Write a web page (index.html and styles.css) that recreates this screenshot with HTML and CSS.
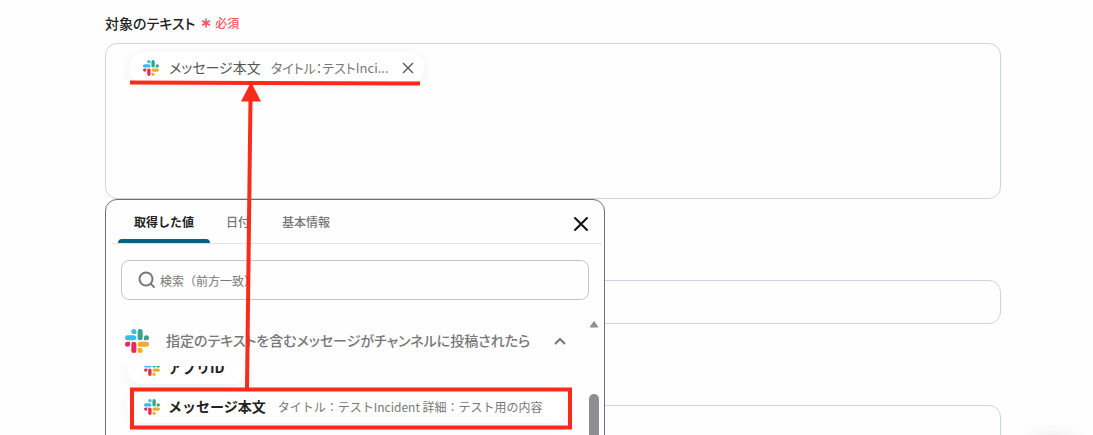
FILE: index.html
```html
<!DOCTYPE html>
<html lang="ja">
<head>
  <meta charset="UTF-8">
  <meta name="viewport" content="width=device-width, initial-scale=1.0">
  <title>対象のテキスト</title>
  <link rel="stylesheet" href="styles.css">
</head>
<body>
  <svg class="sprite" xmlns="http://www.w3.org/2000/svg">
    <symbol id="slack" viewBox="0 0 24 24">
      <path fill="#e9285c" d="M5.042 15.165a2.528 2.528 0 0 1-2.52 2.523A2.528 2.528 0 0 1 0 15.165a2.527 2.527 0 0 1 2.522-2.52h2.52v2.52zM6.313 15.165a2.527 2.527 0 0 1 2.521-2.52 2.527 2.527 0 0 1 2.521 2.52v6.313A2.528 2.528 0 0 1 8.834 24a2.528 2.528 0 0 1-2.521-2.522v-6.313z"></path>
      <path fill="#36bdf2" d="M8.834 5.042a2.528 2.528 0 0 1-2.521-2.52A2.528 2.528 0 0 1 8.834 0a2.528 2.528 0 0 1 2.521 2.522v2.52H8.834zM8.834 6.313a2.528 2.528 0 0 1 2.521 2.521 2.528 2.528 0 0 1-2.521 2.521H2.522A2.528 2.528 0 0 1 0 8.834a2.528 2.528 0 0 1 2.522-2.521h6.312z"></path>
      <path fill="#2fa98a" d="M18.956 8.834a2.528 2.528 0 0 1 2.522-2.521A2.528 2.528 0 0 1 24 8.834a2.528 2.528 0 0 1-2.522 2.521h-2.522V8.834zM17.688 8.834a2.528 2.528 0 0 1-2.523 2.521 2.527 2.527 0 0 1-2.52-2.521V2.522A2.527 2.527 0 0 1 15.165 0a2.528 2.528 0 0 1 2.523 2.522v6.312z"></path>
      <path fill="#f0ad2d" d="M15.165 18.956a2.528 2.528 0 0 1 2.523 2.522A2.528 2.528 0 0 1 15.165 24a2.527 2.527 0 0 1-2.52-2.522v-2.522h2.52zM15.165 17.688a2.527 2.527 0 0 1-2.52-2.523 2.526 2.526 0 0 1 2.52-2.52h6.313A2.527 2.527 0 0 1 24 15.165a2.528 2.528 0 0 1-2.522 2.523h-6.313z"></path>
    </symbol>
  </svg>

  <form class="form">
    <div class="form-group">
      <label class="form-label" for="target-text">
        対象のテキスト
        <span class="required">
          <svg class="asterisk" viewBox="0 0 10 10" fill="none" stroke="currentColor" stroke-width="1.6">
            <path d="M5 0.5v9M1.1 2.7l7.8 4.6M8.9 2.7l-7.8 4.6"></path>
          </svg>
          必須
        </span>
      </label>

      <div class="token-box">
        <div class="chip">
          <svg class="icon-slack"><use href="#slack"></use></svg>
          <span class="chip-name">メッセージ本文</span>
          <span class="chip-value">タイトル：テストInci...</span>
          <button type="button" class="chip-remove" aria-label="削除">
            <svg viewBox="0 0 12 12" fill="none" stroke="currentColor" stroke-width="1.4">
              <path d="M1 1l10 10M11 1L1 11"></path>
            </svg>
          </button>
        </div>
        <textarea id="target-text" class="token-input"></textarea>
      </div>

      <div class="picker">
        <div class="tabs">
          <button type="button" class="tab active">取得した値</button>
          <button type="button" class="tab">日付</button>
          <button type="button" class="tab">基本情報</button>
          <button type="button" class="picker-close" aria-label="閉じる">
            <svg viewBox="0 0 16 16" fill="none" stroke="currentColor" stroke-width="2" stroke-linecap="round">
              <path d="M2 2l12 12M14 2L2 14"></path>
            </svg>
          </button>
        </div>

        <div class="search">
          <svg viewBox="0 0 18 18" fill="none" stroke="currentColor" stroke-width="2">
            <circle cx="8" cy="8" r="6.5"></circle>
            <path d="M12.6 12.6l4 4"></path>
          </svg>
          <input type="text" placeholder="検索（前方一致）" aria-label="検索">
        </div>

        <div class="picker-body">
          <div class="group">
            <button type="button" class="group-header">
              <svg class="icon-slack large"><use href="#slack"></use></svg>
              <span>指定のテキストを含むメッセージがチャンネルに投稿されたら</span>
              <svg class="chevron" viewBox="0 0 12 8" fill="none" stroke="currentColor" stroke-width="2">
                <path d="M1 7l5-5 5 5"></path>
              </svg>
            </button>
            <div class="items">
              <ul>
                <li>
                  <button type="button" class="item">
                    <svg class="icon-slack"><use href="#slack"></use></svg>
                    <span class="item-name">アプリID</span>
                  </button>
                </li>
                <li>
                  <button type="button" class="item">
                    <svg class="icon-slack"><use href="#slack"></use></svg>
                    <span class="item-name">メッセージ本文</span>
                    <span class="item-value">タイトル：テストIncident 詳細：テスト用の内容</span>
                  </button>
                </li>
              </ul>
            </div>
          </div>
          <div class="scrollbar">
            <svg viewBox="0 0 10 8"><path fill="currentColor" stroke="currentColor" stroke-linejoin="round" d="M5 1.5l3.8 5.5H1.2z"></path></svg>
            <div class="scrollbar-thumb"></div>
          </div>
        </div>
      </div>
    </div>

    <input type="text" class="form-input" aria-label="入力欄 2">
    <input type="text" class="form-input" aria-label="入力欄 3">
  </form>

  <button type="button" class="floating-btn" aria-label="ヘルプ"></button>

  <!-- 操作手順を示す赤い注釈 -->
  <svg class="annotation" viewBox="0 0 580 435" fill="none" stroke="#fa2c19">
    <path stroke-width="4" d="M130 82.5L420 83.5"></path>
    <path stroke-width="4" d="M250.5 98L247 388"></path>
    <path fill="#fa2c19" stroke="none" d="M251 82l10 19.5h-20z"></path>
    <rect x="132" y="389.5" width="438" height="38" stroke-width="4"></rect>
  </svg>
</body>
</html>
```
FILE: styles.css
```css
* {
  box-sizing: border-box;
  margin: 0;
  padding: 0;
}

body {
  min-height: 100vh;
  overflow: hidden;
  background-color: #fefefe;
  color: #222;
  font-family: 'Noto Sans CJK JP', 'Noto Sans', sans-serif;
  font-size: 12px;
}

button,
input,
textarea {
  border: none;
  background: none;
  color: inherit;
  font: inherit;
  outline: none;
}

button {
  cursor: pointer;
}

.sprite {
  position: absolute;
  width: 0;
  height: 0;
}

.form {
  display: flex;
  flex-direction: column;
  gap: 81px;
  padding: 11px 92px 0 105px;
}

.form-group {
  position: relative;
}

.form-label {
  display: flex;
  align-items: center;
  gap: 6px;
  margin-bottom: 8px;
  font-size: 14px;
  font-weight: 500;
  line-height: 24px;
  font-feature-settings: 'palt';
}

.required {
  display: flex;
  align-items: center;
  gap: 4px;
  color: #fb5360;
  font-size: 12px;
  font-feature-settings: normal;
}

.asterisk {
  width: 10px;
  height: 10px;
}

.token-box {
  display: flex;
  flex-direction: column;
  align-items: flex-start;
  height: 156px;
  padding: 8px 23px;
  border: 1px solid #cfd3e0;
  border-radius: 12px;
}

.chip {
  display: flex;
  align-items: center;
  height: 32px;
  padding: 0 10px 0 14px;
  border-radius: 16px;
  background-color: #fff;
  box-shadow: 0 2px 12px rgba(80, 50, 110, 0.08);
  font-feature-settings: 'palt';
}

.icon-slack {
  flex-shrink: 0;
  width: 16px;
  height: 16px;
}

.icon-slack.large {
  width: 24px;
  height: 24px;
}

.chip-name,
.chip-value,
.item-name,
.item-value,
.group-header span {
  padding-bottom: 2px;
}

.chip-name {
  margin-left: 10px;
  color: #555;
  font-size: 14px;
}

.chip-value {
  margin-left: 10px;
  color: #777;
  font-size: 13px;
}

.chip-remove {
  display: flex;
  margin-left: 13px;
  color: #555;
}

.chip-remove svg {
  width: 12px;
  height: 12px;
}

.token-input {
  flex: 1;
  width: 100%;
  resize: none;
}

.form-input {
  height: 44px;
  padding: 0 16px;
  border: 1px solid #cfd3e0;
  border-radius: 12px;
}

.picker {
  position: absolute;
  top: 100%;
  left: 0;
  width: 500px;
  max-width: 100%;
  border: 1px solid #6e6e73;
  border-radius: 12px;
  background-color: #fefefe;
}

.tabs {
  display: flex;
  height: 44px;
  margin: 0 2px 0 6px;
  padding-left: 6px;
  border-bottom: 1px solid #e2e3e8;
}

.tab {
  display: grid;
  grid-template-rows: 1fr 4px;
  align-items: center;
  padding: 4px 16px 0;
  color: #777;
  font-weight: 500;
}

.tab.active {
  color: #222;
  font-weight: 700;
}

.tab.active::after {
  content: '';
  height: 4px;
  margin: 0 -16px;
  border-radius: 4px 4px 0 0;
  background-color: #0b5f85;
}

.picker-close {
  display: flex;
  align-items: center;
  margin: 4px 13px 0 auto;
  color: #111;
}

.picker-close svg {
  width: 16px;
  height: 16px;
}

.search {
  display: flex;
  align-items: center;
  gap: 4px;
  height: 40px;
  margin: 16px 15px 0;
  padding: 0 16px;
  border: 1px solid #c6c6ca;
  border-radius: 8px;
  color: #777;
}

.search svg {
  width: 18px;
  height: 18px;
}

.search input {
  flex: 1;
}

.search input::placeholder {
  color: #777;
  opacity: 1;
}

.picker-body {
  display: flex;
  margin-top: 20px;
  padding-right: 5px;
}

.group {
  flex: 1;
}

.group-header {
  display: flex;
  align-items: center;
  height: 42px;
  padding-left: 19px;
  color: #777;
  font-size: 14px;
  font-weight: 500;
  font-feature-settings: 'palt';
}

.group-header span {
  margin: 0 24px 0 17px;
  white-space: nowrap;
}

.chevron {
  width: 12px;
  height: 8px;
}

.items {
  margin-top: 4px;
  padding-left: 21px;
  overflow: hidden;
}

.items ul {
  min-height: 160px;
  margin-top: -14px;
  list-style: none;
}

.items li {
  display: flex;
  margin-bottom: 7px;
}

.item {
  display: flex;
  align-items: center;
  height: 32px;
  padding: 0 24px 0 17px;
  border-radius: 16px;
  background-color: #fff;
  box-shadow: 0 2px 12px rgba(80, 50, 110, 0.08);
}

.item-name {
  margin-left: 8px;
  font-size: 14px;
  font-weight: 700;
}

.item-value {
  margin-left: 12px;
  color: #777;
  font-size: 12px;
}

.scrollbar {
  display: flex;
  flex-direction: column;
  width: 10px;
  color: #8e8d92;
}

.scrollbar svg {
  width: 10px;
  height: 8px;
}

.scrollbar-thumb {
  flex: 1;
  margin-top: 66px;
  border-radius: 5px;
  background-color: #8e8d92;
}

.floating-btn {
  position: fixed;
  right: 12px;
  bottom: -62px;
  width: 56px;
  height: 56px;
  border-radius: 50%;
  box-shadow: 0 0 20px rgba(60, 50, 70, 0.25);
}

/* 画面の上に重ねる注釈 */
.annotation {
  position: absolute;
  top: 0;
  left: 0;
  width: 580px;
  height: 435px;
  pointer-events: none;
}
```
